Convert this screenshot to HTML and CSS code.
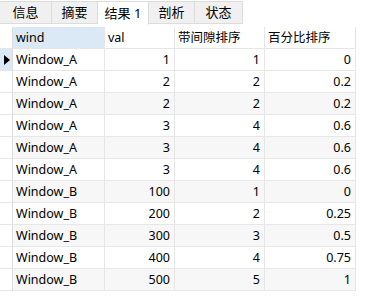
FILE: index.html
```html
<!DOCTYPE html>
<html>
<head>
<meta charset="utf-8">
<link rel="stylesheet" href="styles.css">
</head>
<body>
<div class="tabs">
  <div class="tab t1">信息</div>
  <div class="tab t2">摘要</div>
  <div class="tab t3 active">结果 1</div>
  <div class="tab t4">剖析</div>
  <div class="tab t5">状态</div>
</div>
<div class="grid">
  <div class="row head">
    <div class="c g"></div>
    <div class="c w sel">wind</div>
    <div class="c v">val</div>
    <div class="c r">带间隙排序</div>
    <div class="c p">百分比排序</div>
  </div>
  <div class="row cur"><div class="c g"><span class="tri"></span></div><div class="c w">Window_A</div><div class="c v n">1</div><div class="c r n">1</div><div class="c p n">0</div></div>
  <div class="row"><div class="c g"></div><div class="c w">Window_A</div><div class="c v n">2</div><div class="c r n">2</div><div class="c p n">0.2</div></div>
  <div class="row alt"><div class="c g"></div><div class="c w">Window_A</div><div class="c v n">2</div><div class="c r n">2</div><div class="c p n">0.2</div></div>
  <div class="row"><div class="c g"></div><div class="c w">Window_A</div><div class="c v n">3</div><div class="c r n">4</div><div class="c p n">0.6</div></div>
  <div class="row alt"><div class="c g"></div><div class="c w">Window_A</div><div class="c v n">3</div><div class="c r n">4</div><div class="c p n">0.6</div></div>
  <div class="row"><div class="c g"></div><div class="c w">Window_A</div><div class="c v n">3</div><div class="c r n">4</div><div class="c p n">0.6</div></div>
  <div class="row alt"><div class="c g"></div><div class="c w">Window_B</div><div class="c v n">100</div><div class="c r n">1</div><div class="c p n">0</div></div>
  <div class="row"><div class="c g"></div><div class="c w">Window_B</div><div class="c v n">200</div><div class="c r n">2</div><div class="c p n">0.25</div></div>
  <div class="row alt"><div class="c g"></div><div class="c w">Window_B</div><div class="c v n">300</div><div class="c r n">3</div><div class="c p n">0.5</div></div>
  <div class="row"><div class="c g"></div><div class="c w">Window_B</div><div class="c v n">400</div><div class="c r n">4</div><div class="c p n">0.75</div></div>
  <div class="row alt"><div class="c g"></div><div class="c w">Window_B</div><div class="c v n">500</div><div class="c r n">5</div><div class="c p n">1</div></div>
</div>
</body>
</html>
```
FILE: styles.css
```css
* { box-sizing: border-box; }
html, body { margin: 0; padding: 0; background: #fff; }
body {
  width: 368px;
  height: 304px;
  overflow: hidden;
  font-family: "Noto Sans", "Noto Sans CJK SC", sans-serif;
  font-size: 12.5px;
  color: #000;
}
.tabs {
  display: flex;
  height: 24px;
  padding-top: 1px;
  align-items: flex-start;
}
.tab {
  display: flex;
  align-items: center;
  justify-content: center;
  height: 23px;
  background: #f0f0f0;
  border: 1px solid #dcdcdc;
  border-left: none;
  padding: 0;
  white-space: nowrap;
  line-height: 1;
  font-size: 13px;
}
.t1 { width: 52px; }
.t2 { width: 46px; }
.t3 { width: 51px; }
.t4 { width: 46px; }
.t5 { width: 48px; }
.tab.active {
  background: #fff;
  border-bottom-color: #fff;
  height: 24px;
}
.grid {
  margin-top: 3px;
  width: 356px;
}
.row {
  display: flex;
  height: 22px;
}
.c {
  height: 22px;
  border-right: 1px solid #e6e6e6;
  border-bottom: 1px solid #e6e6e6;
  padding: 0 4px 0 3px;
  line-height: 21px;
  white-space: nowrap;
  overflow: hidden;
}
.g { width: 13px; padding: 0; position: relative; border-right-color: #dcdcdc; }
.w { width: 92px; }
.v { width: 70px; }
.r { width: 90px; }
.p { width: 91px; }
.n { text-align: right; }
.sel { background: #dbe9f7; }
.alt .c { background: #f7f7f7; }
.alt .g { background: #fff; }
.cur .g { background: #dbe9f7; }
.tri {
  position: absolute;
  left: 4px;
  top: 6px;
  width: 0;
  height: 0;
  border-top: 5px solid transparent;
  border-bottom: 5px solid transparent;
  border-left: 6px solid #000;
}
```
